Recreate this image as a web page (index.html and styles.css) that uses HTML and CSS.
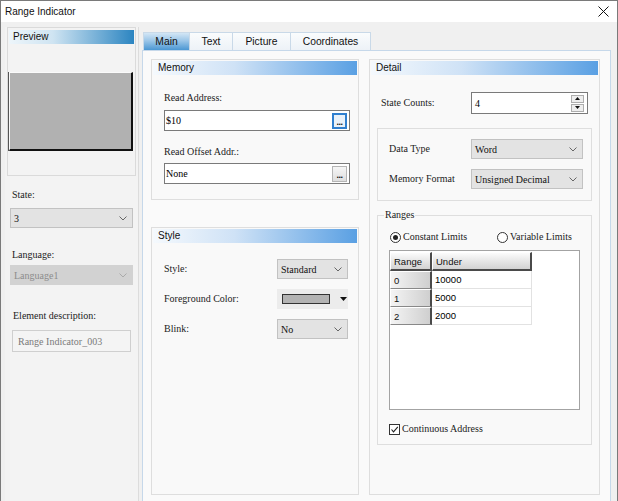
FILE: index.html
```html
<!DOCTYPE html>
<html>
<head>
<meta charset="utf-8">
<link rel="stylesheet" href="styles.css">
</head>
<body>
<div class="window">
  <div class="titlebar">
    <span class="title">Range Indicator</span>
    <svg class="close" width="11" height="11" viewBox="0 0 11 11"><path d="M0.5 0.5 L10.5 10.5 M10.5 0.5 L0.5 10.5" stroke="#111" stroke-width="1"/></svg>
  </div>
  <div class="body">
    <div class="left">
      <div class="preview">
        <div class="preview-head">Preview</div>
        <div class="preview-rect"></div>
      </div>
      <div class="lbl state-lbl">State:</div>
      <div class="select lsel state-sel"><span>3</span><svg class="chev" width="8" height="5" viewBox="0 0 8 5"><path d="M0.5 0.5 L4 4 L7.5 0.5" fill="none" stroke="#666"/></svg></div>
      <div class="lbl lang-lbl">Language:</div>
      <div class="select lsel lang-sel disabled"><span>Language1</span><svg class="chev" width="8" height="5" viewBox="0 0 8 5"><path d="M0.5 0.5 L4 4 L7.5 0.5" fill="none" stroke="#aaa"/></svg></div>
      <div class="lbl desc-lbl">Element description:</div>
      <div class="desc-input">Range Indicator_003</div>
    </div>
    <div class="right">
      <div class="tabs">
        <div class="tab active t-main">Main</div>
        <div class="tab t-text">Text</div>
        <div class="tab t-pic">Picture</div>
        <div class="tab t-coord">Coordinates</div>
      </div>
      <div class="page">
        <div class="col">
          <div class="group memory">
            <div class="gh">Memory</div>
            <div class="mem-body">
              <div class="lbl mem-lbl1">Read Address:</div>
              <div class="addr addr1"><span>$10</span><span class="dots focus">...</span></div>
              <div class="lbl mem-lbl2">Read Offset Addr.:</div>
              <div class="addr addr2"><span>None</span><span class="dots">...</span></div>
            </div>
          </div>
          <div class="group style">
            <div class="gh">Style</div>
            <div class="style-body">
              <div class="row">
                <span class="lbl">Style:</span>
                <div class="select ssel"><span>Standard</span><svg class="chev" width="8" height="5" viewBox="0 0 8 5"><path d="M0.5 0.5 L4 4 L7.5 0.5" fill="none" stroke="#666"/></svg></div>
              </div>
              <div class="row">
                <span class="lbl">Foreground Color:</span>
                <div class="picker"><span class="swatch"></span><svg width="7" height="4" viewBox="0 0 7 4"><path d="M0 0 L7 0 L3.5 4 Z" fill="#111"/></svg></div>
              </div>
              <div class="row">
                <span class="lbl">Blink:</span>
                <div class="select ssel"><span>No</span><svg class="chev" width="8" height="5" viewBox="0 0 8 5"><path d="M0.5 0.5 L4 4 L7.5 0.5" fill="none" stroke="#666"/></svg></div>
              </div>
            </div>
          </div>
        </div>
        <div class="group detail">
          <div class="gh">Detail</div>
          <div class="sc-row">
            <span class="lbl sc-lbl">State Counts:</span>
            <div class="spin">
              <span>4</span>
              <div class="spin-btns">
                <div class="sb"><svg width="5" height="3" viewBox="0 0 5 3"><path d="M0 3 L5 3 L2.5 0 Z" fill="#111"/></svg></div>
                <div class="sb"><svg width="5" height="3" viewBox="0 0 5 3"><path d="M0 0 L5 0 L2.5 3 Z" fill="#111"/></svg></div>
              </div>
            </div>
          </div>
          <div class="inner">
            <div class="irow">
              <span class="lbl ilbl">Data Type</span>
              <div class="select dsel"><span>Word</span><svg class="chev" width="8" height="5" viewBox="0 0 8 5"><path d="M0.5 0.5 L4 4 L7.5 0.5" fill="none" stroke="#666"/></svg></div>
            </div>
            <div class="irow">
              <span class="lbl ilbl">Memory Format</span>
              <div class="select dsel"><span>Unsigned Decimal</span><svg class="chev" width="8" height="5" viewBox="0 0 8 5"><path d="M0.5 0.5 L4 4 L7.5 0.5" fill="none" stroke="#666"/></svg></div>
            </div>
          </div>
          <fieldset class="ranges">
            <legend>Ranges</legend>
            <div class="radios">
              <div class="radio r1"><span class="circle checked"></span><span class="lbl">Constant Limits</span></div>
              <div class="radio"><span class="circle"></span><span class="lbl">Variable Limits</span></div>
            </div>
            <div class="table">
              <div class="trow">
                <div class="hc c1">Range</div>
                <div class="hc c2">Under</div>
              </div>
              <div class="trow">
                <div class="rh">0</div>
                <div class="vc">10000</div>
              </div>
              <div class="trow">
                <div class="rh">1</div>
                <div class="vc">5000</div>
              </div>
              <div class="trow">
                <div class="rh">2</div>
                <div class="vc">2000</div>
              </div>
            </div>
            <div class="check-row">
              <span class="checkbox"><svg width="9" height="9" viewBox="0 0 9 9"><path d="M1.5 4.5 L3.5 6.8 L7.8 1.8" fill="none" stroke="#222" stroke-width="1.1"/></svg></span>
              <span class="lbl">Continuous Address</span>
            </div>
          </fieldset>
        </div>
      </div>
    </div>
  </div>
</div>
</body>
</html>
```

FILE: styles.css
```css
* { box-sizing: border-box; }
body {
  margin: 0;
  font-family: "Liberation Sans", Arial, sans-serif;
  font-size: 10px;
  color: #000;
}
.window {
  width: 618px;
  height: 501px;
  border: 1px solid #7a7a7a;
  border-bottom: none;
  background: #f0f0f0;
  display: flex;
  flex-direction: column;
  overflow: hidden;
}
.titlebar {
  height: 21px;
  flex: none;
  background: #fff;
  display: flex;
  align-items: center;
  justify-content: space-between;
  padding: 0 8px 0 4px;
}
.title { font-size: 10px; color: #111; }
.body {
  flex: 1;
  display: flex;
  padding: 5px 6px 0 4px;
  min-height: 0;
}
.lbl {
  font-family: "Liberation Serif", "Times New Roman", serif;
  font-size: 10px;
  line-height: 12px;
  color: #222;
  white-space: nowrap;
}
/* left panel */
.left {
  width: 134px;
  flex: none;
  margin-right: 3px;
  background: #f3f3f3;
  border-right: 1px solid #dcdcdc;
  padding: 0 2px;
}
.preview {
  height: 149px;
  border: 1px solid #dadada;
  padding: 2px 1px 0 1px;
}
.preview-head {
  height: 14px;
  line-height: 14px;
  padding-left: 4px;
  font-size: 10px;
  color: #111;
  background: linear-gradient(to right, #edf5fa, #cfe4f2 35%, #2c85c1);
}
.preview-rect {
  margin: 28px 0 0 0;
  width: 124px;
  height: 79px;
  background: #b1b1b1;
  border-top: 1px solid #fafafa;
  border-left: 1px solid #fafafa;
  border-right: 2px solid #111;
  border-bottom: 2px solid #111;
  box-shadow: -1px 0 0 #555;
}
.state-lbl { margin-top: 13px; padding-left: 5px; }
.select {
  display: flex;
  align-items: center;
  justify-content: space-between;
  background: #e3e3e3;
  border: 1px solid #c2c2c2;
  font-family: "Liberation Serif", "Times New Roman", serif;
  font-size: 10px;
  padding: 0 5px 0 3px;
  color: #111;
}
.lsel { width: 123px; height: 20px; margin-left: 3px; }
.state-sel { margin-top: 7px; }
.lang-lbl { margin-top: 21px; padding-left: 5px; }
.lang-sel { margin-top: 4px; }
.disabled { background: #d2d2d2; border-color: #d2d2d2; color: #8c8c8c; }
.desc-lbl { margin-top: 25px; padding-left: 6px; }
.desc-input {
  margin: 8px 0 0 5px;
  width: 119px;
  height: 22px;
  border: 1px solid #cfcfcf;
  background: #f4f4f4;
  font-family: "Liberation Serif", "Times New Roman", serif;
  font-size: 10px;
  color: #7a7a7a;
  display: flex;
  align-items: center;
  padding-left: 5px;
}
/* right side */
.right {
  width: 469px;
  flex: none;
  display: flex;
  flex-direction: column;
}
.tabs {
  display: flex;
  margin-top: 5px;
  padding-left: 1px;
  height: 18px;
  flex: none;
}
.tab {
  height: 18px;
  border: 1px solid #c9d9e8;
  border-bottom: none;
  margin-right: -1px;
  display: flex;
  align-items: center;
  justify-content: center;
  background: linear-gradient(#fafcfd, #edf2f7);
  font-size: 10.3px;
  color: #111;
}
.tab.active { background: linear-gradient(#d3e6f5, #9cc6e8 45%, #4b97d3); }
.t-main { width: 47px; }
.t-text { width: 44px; }
.t-pic { width: 59px; }
.t-coord { width: 81px; }
.page {
  flex: 1;
  border: 1px solid #c6d8ea;
  border-bottom: none;
  background: #fafafa;
  display: flex;
  gap: 10px;
  padding: 8px 9px 0 8px;
}
.col { width: 208px; display: flex; flex-direction: column; }
.group {
  border: 1px solid #dedede;
  background: #f9f9f9;
}
.gh {
  height: 14px;
  line-height: 14px;
  margin: 1px 1px 0;
  padding-left: 5px;
  font-size: 10px;
  color: #111;
  background: linear-gradient(to right, #f5f9fd, #cfe2f6 40%, #5aa0e3);
}
.memory { height: 141px; }
.mem-body { padding: 0 8px 0 12px; }
.mem-lbl1 { margin-top: 17px; }
.mem-lbl2 { margin-top: 15px; }
.addr {
  height: 21px;
  border: 1px solid #7a7a7a;
  background: #fff;
  display: flex;
  align-items: center;
  justify-content: space-between;
  padding: 0 2px 0 1px;
  font-family: "Liberation Serif", "Times New Roman", serif;
  font-size: 10px;
}
.addr1 { margin-top: 6px; }
.addr2 { margin-top: 5px; }
.dots {
  width: 15px;
  height: 16px;
  border: 1px solid #b5b5b5;
  background: linear-gradient(#f6f6f6, #dedede);
  font-family: "Liberation Sans", Arial, sans-serif;
  font-weight: bold;
  font-size: 9px;
  line-height: 16px;
  text-align: center;
  letter-spacing: -0.5px;
  color: #111;
}
.dots.focus { border: 2px solid #2f7fcf; background: #e9f1f9; line-height: 14px; }
.style { margin-top: 27px; height: 268px; }
.style-body { padding: 16px 10px 0 12px; display: flex; flex-direction: column; gap: 10px; }
.row { display: flex; align-items: center; justify-content: space-between; height: 20px; }
.ssel { width: 71px; height: 20px; }
.picker {
  width: 71px;
  height: 20px;
  background: #ececec;
  display: flex;
  align-items: center;
  padding-left: 5px;
  gap: 10px;
}
.swatch {
  width: 48px;
  height: 10px;
  background: #b3b3b3;
  border: 1px solid #333;
}
.detail { width: 231px; height: 436px; }
.sc-row { display: flex; align-items: center; margin-top: 17px; padding-left: 11px; }
.sc-lbl { width: 90px; }
.spin {
  width: 117px;
  height: 22px;
  border: 1px solid #7a7a7a;
  background: #fff;
  display: flex;
  align-items: center;
  justify-content: space-between;
  padding: 0 3px 0 3px;
  font-family: "Liberation Serif", "Times New Roman", serif;
  font-size: 10px;
}
.spin-btns { display: flex; flex-direction: column; gap: 1px; }
.sb {
  width: 13px;
  height: 8px;
  border: 1px solid #adadad;
  background: #eeeeee;
  display: flex;
  align-items: center;
  justify-content: center;
}
.inner {
  margin: 14px 0 0 7px;
  width: 215px;
  height: 73px;
  border: 1px solid #dedede;
  padding: 10px 0 0 11px;
  display: flex;
  flex-direction: column;
  gap: 10px;
}
.irow { display: flex; align-items: center; height: 20px; }
.ilbl { width: 82px; }
.dsel { width: 112px; height: 20px; }
.ranges {
  margin: 8px 0 0 7px;
  width: 215px;
  border: 1px solid #dedede;
  padding: 0 0 9px 0;
  min-width: 0;
}
.ranges legend {
  margin-left: 6px;
  padding: 0 1px;
  font-family: "Liberation Serif", "Times New Roman", serif;
  font-size: 10px;
  line-height: 12px;
  color: #222;
}
.radios { display: flex; margin-top: 10px; padding-left: 12px; }
.radio { display: flex; align-items: center; gap: 2px; }
.r1 { width: 107px; }
.circle {
  width: 11px;
  height: 11px;
  border: 1px solid #333;
  border-radius: 50%;
  background: #fff;
  display: flex;
  align-items: center;
  justify-content: center;
}
.circle.checked::after {
  content: "";
  width: 5px;
  height: 5px;
  border-radius: 50%;
  background: #222;
}
.table {
  margin: 7px 0 0 11px;
  width: 191px;
  height: 160px;
  border: 1px solid #a3a3a3;
  background: #fff;
  padding: 1px 0 0 0;
}
.trow { display: flex; height: 18px; }
.trow:first-child { height: 19px; }
.hc, .rh {
  font-family: "Liberation Sans", Arial, sans-serif;
  font-size: 9.5px;
  color: #111;
  display: flex;
  align-items: center;
  padding-left: 3px;
  background: linear-gradient(#fbfbfb, #d2d2d2);
  border-top: 1px solid #fff;
  border-left: 1px solid #fff;
  border-right: 2px solid #4a4a4a;
  border-bottom: 2px solid #4a4a4a;
}
.c1 { width: 42px; }
.c2 { width: 100px; }
.rh {
  width: 42px;
  border-bottom: 1px solid #888;
  background: linear-gradient(to right, #f4f4f4, #cfcfcf);
}
.vc {
  width: 100px;
  font-family: "Liberation Sans", Arial, sans-serif;
  font-size: 9.5px;
  display: flex;
  align-items: center;
  padding-left: 3px;
  border-right: 1px solid #e2e2e2;
  border-bottom: 1px solid #e2e2e2;
}
.check-row { display: flex; align-items: center; gap: 2px; margin-top: 13px; padding-left: 11px; }
.checkbox {
  width: 11px;
  height: 11px;
  border: 1px solid #333;
  background: #fff;
  display: flex;
  align-items: center;
  justify-content: center;
}
```
